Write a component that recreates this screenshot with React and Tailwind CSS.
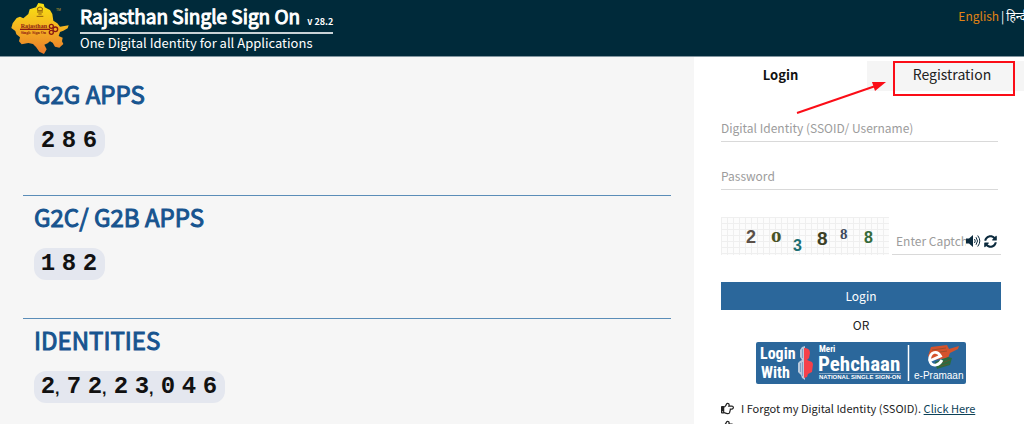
import { FaRegHandPointRight, FaSyncAlt } from "react-icons/fa";

const stats = [
  { title: "G2G APPS", value: "286" },
  { title: "G2C/ G2B APPS", value: "182" },
  { title: "IDENTITIES", value: "2,72,23,046" },
];

const captcha = [
  { char: "2", x: 25, y: 26, size: 18, fill: "#5b5048", font: "Liberation Sans" },
  { char: "o", x: 50, y: 25, size: 21, fill: "#4a5426", font: "Liberation Serif" },
  { char: "3", x: 72, y: 34, size: 16, fill: "#1d6f74", font: "Liberation Sans" },
  { char: "8", x: 96, y: 28, size: 19, fill: "#3b3f25", font: "Liberation Sans" },
  { char: "8", x: 119, y: 22, size: 15, fill: "#3f4a5c", font: "Liberation Serif" },
  { char: "8", x: 143, y: 26, size: 16, fill: "#356a3a", font: "Liberation Sans" },
];

function MapLogo() {
  return (
    <svg viewBox="30 0 180 168" className="h-14 w-[60px] shrink-0" role="img" aria-label="Rajasthan Single Sign On">
      <defs>
        <linearGradient id="map" x1="0" y1="0" x2="0" y2="1">
          <stop offset="0" stopColor="#f8e210" />
          <stop offset="0.45" stopColor="#f5b820" />
          <stop offset="1" stopColor="#e9782c" />
        </linearGradient>
      </defs>
      <path
        fill="url(#map)"
        d="M115 9L131 12 134 22 150 30 157 42 160 62 172 70 180 80 206 76 203 85 190 92 180 96 176 108 188 113 186 124 190 132 178 143 165 140 158 128 150 124 143 130 133 134 140 148 132 162 118 155 108 141 99 132 85 129 65 133 57 124 60 112 49 103 46 93 34 84 38 70 50 54 60 50 70 55 85 42 89 28 108 22Z"
      />
      <g fill="none" stroke="#8c5a0c" strokeWidth="3">
        <path d="M113 24q7-6 14 0v8h-14zM111 36h18M115 42h10M110 49h20" />
      </g>
      <g stroke="#8b1a12" fill="none" strokeWidth="4">
        <path d="M60 88h90" />
        <circle cx="154" cy="79" r="6" />
        <circle cx="154" cy="97" r="6" />
        <circle cx="166" cy="88" r="7" />
      </g>
      <g fill="#8b1a12" fontFamily="Liberation Serif, serif" fontWeight="bold">
        <text x="62" y="84" fontSize="18">Rajasthan</text>
        <text x="62" y="102" fontSize="12">Single Sign On</text>
      </g>
      <text x="168" y="32" fontSize="10" fill="#c9a227" fontFamily="Liberation Sans, sans-serif">TM</text>
    </svg>
  );
}

function Counter({ value }) {
  const groups = value.match(/\d,?/g);
  return (
    <p className="flex h-8 w-fit gap-[7px] rounded-xl bg-[#e4e7ef] pr-2 pl-[7px] font-['Liberation_Mono',monospace] text-2xl leading-8 font-bold text-[#111]">
      {groups.map((g, i) => (
        <span key={i} className="flex">
          <span className="flex w-[14px] justify-center">{g[0]}</span>
          {g[1] && <span className="w-[5px] font-['Liberation_Sans',sans-serif] text-base leading-9">,</span>}
        </span>
      ))}
    </p>
  );
}

function Captcha() {
  return (
    <svg viewBox="0 0 168 38" className="h-[38px] w-[168px] shrink-0" role="img" aria-label="Captcha">
      <defs>
        <pattern id="grid" width="6" height="6" patternUnits="userSpaceOnUse">
          <path d="M0 .5H6M.5 0V6" stroke="#efefef" fill="none" />
        </pattern>
      </defs>
      <rect width="168" height="38" fill="#fcfcfc" />
      <rect width="168" height="38" fill="url(#grid)" />
      {captcha.map((c, i) => (
        <text key={i} x={c.x} y={c.y} fontSize={c.size} fill={c.fill} fontFamily={c.font} fontWeight="bold">
          {c.char}
        </text>
      ))}
    </svg>
  );
}

function Volume() {
  return (
    <svg viewBox="0 0 15 14" className="h-[14px] w-[15px]" fill="none" stroke="#0b2a3d" aria-hidden="true">
      <path d="M0 4.500h3L7 1v12L3 9.500H0z" fill="#0b2a3d" stroke="none" />
      <path d="M8.500 5q1.500 2 0 4M10 3.200q3 3.800 0 7.600M11.700 1.500q4.200 5.500 0 11" strokeWidth="1" />
    </svg>
  );
}

function PehchaanBanner() {
  return (
    <svg viewBox="0 0 210 42" className="h-[42px] w-[210px]" aria-hidden="true">
      <rect width="210" height="42" rx="2" fill="#2b679b" />
      <g fill="#fff" fontFamily="'Liberation Sans Narrow', 'Roboto Condensed', 'Open Sans Condensed', 'Liberation Sans', sans-serif" fontWeight="bold">
        <text x="4" y="17" fontSize="16">Login</text>
        <text x="5" y="36" fontSize="16">With</text>
        <text x="63" y="10" fontSize="9">Meri</text>
        <text x="62" y="29" fontSize="21">Pehchaan</text>
      </g>
      <path d="M63 31.500H145" stroke="#7fa3c4" />
      <text x="63" y="37" fontSize="6" fill="#fff" fontFamily="Liberation Sans, sans-serif" fontWeight="bold">NATIONAL SINGLE SIGN-ON</text>
      <path d="M49 4V38L46 36 45 33 42 30V21L44 19 46 18 44 15V8L46 5Z" fill="#b9c9dc" />
      <path d="M46.500 7v9M44.500 21v9M46.500 20v14" stroke="#7d9fc2" />
      <path d="M48 6Q54 6 54 11L53 16 51 18 56 20 57 22 56 30 52 32 51 35 48 36Z" fill="#f5414a" />
      <path d="M152.500 3v36" stroke="#fff" strokeWidth="1.500" />
      <path d="M175 5L191 3 193 7 203 4 202 7 194 11 192 16 177 18 172 14Z" fill="#d5532c" />
      <path d="M179 20L192 15 196 16 194 23 181 27Z" fill="#2b6b40" />
      <path d="M176 8l14-2M177 11l14-2M184 24l9-2M186 21l8-3" stroke="#7a4a2c" strokeWidth=".6" />
      <path d="M174.500 18.500L184.500 14Q182 9.500 178 10.500T173.500 18Q175 24 180 23 184 22 186 18" fill="none" stroke="#fff" strokeWidth="2.800" />
      <text x="158" y="37" fontSize="10" fill="#fff" fontFamily="Liberation Sans, sans-serif">e-Pramaan</text>
    </svg>
  );
}

const field =
  "block h-[26px] w-full border-b border-[#d9d9d9] bg-transparent pb-[2px] text-xs leading-5 outline-none placeholder:text-[#9c9c9c] placeholder:opacity-100";

export default function App() {
  return (
    <div className="flex h-screen flex-col overflow-hidden bg-[#f6f6f6] font-['Noto_Sans_CJK_SC','Noto_Sans',sans-serif] text-[#222]">
      <header className="flex shrink-0 items-start border-b border-[#8296a0] bg-[#002a3a] pl-[10px] text-white">
        <MapLogo />
        <div className="ml-[10px] pt-1">
          <h1 className="flex items-end gap-[7px] border-b-2 border-[#c9d2d6] pb-1 text-[19px] leading-6 whitespace-nowrap [-webkit-text-stroke:1px_white]">
            Rajasthan Single Sign On
            <span className="text-[9px] leading-3 font-bold [-webkit-text-stroke:0]">v 28.2</span>
          </h1>
          <p className="text-[13px] leading-[17px]">One Digital Identity for all Applications</p>
        </div>
        <nav className="-mr-[5px] ml-auto flex gap-[2px] pt-[6px] text-xs leading-5 whitespace-nowrap">
          <a href="#en" className="text-[#e28413]">English</a>
          <span>|</span>
          <a href="#hi" lang="hi">हिन्दी</a>
        </nav>
      </header>

      <div className="flex min-h-0 flex-1">
        <main className="min-w-0 flex-1 px-[23px]">
          {stats.map((s) => (
            <section key={s.title} className="h-[123px] border-b border-[#5b8db8] pt-[5px] pl-[11px] first:h-[139px] first:pt-[21px] last:border-b-0">
              <h2 className="mb-[15px] text-2xl leading-8 text-[#17548f] [-webkit-text-stroke:1px_#17548f]">{s.title}</h2>
              <Counter value={s.value} />
            </section>
          ))}
        </main>

        <aside className="relative w-[330px] shrink-0 bg-white pt-1">
          <div role="tablist" className="flex leading-[27px]">
            <button role="tab" aria-selected="true" className="w-[173px] shrink-0 pb-[3px] text-[13px] font-bold text-[#111]">Login</button>
            <button role="tab" aria-selected="false" className="w-[170px] shrink-0 bg-[#f5f5f5] pb-[3px] text-sm leading-[27px]">Registration</button>
          </div>
          <form className="w-[307px] pt-[25px] pl-[27px]" onSubmit={(e) => e.preventDefault()}>
            <div className="space-y-[22px] pr-[3px]">
              <input aria-label="Digital Identity (SSOID/ Username)" placeholder="Digital Identity (SSOID/ Username)" className={field} />
              <input aria-label="Password" type="password" placeholder="Password" className={field} />
            </div>
            <div className="mt-[27px] flex">
              <Captcha />
              <div className="ml-[3px] flex w-[109px] items-center self-end border-b border-[#d9d9d9] pl-1">
                <input aria-label="Captcha" placeholder="Enter Captcha" className="h-[26px] w-[70px] pb-[2px] text-xs leading-5 outline-none placeholder:text-[#9c9c9c] placeholder:opacity-100" />
                <button type="button" aria-label="Play captcha"><Volume /></button>
                <button type="button" aria-label="Refresh captcha" className="ml-[3px] text-[13px] text-[#0b2a3d]"><FaSyncAlt /></button>
              </div>
            </div>
            <button type="submit" className="mt-[27px] block h-7 w-full bg-[#2b679b] pb-px text-xs leading-[27px] text-white">Login</button>
            <p className="pt-[5px] pb-[7px] text-center text-xs leading-5">OR</p>
            <button type="button" aria-label="Login with Meri Pehchaan" className="mx-auto block"><PehchaanBanner /></button>
            <ul className="mt-[15px] space-y-[3px] text-[11px] leading-[18px] whitespace-nowrap">
              <li className="flex items-center gap-[7px]">
                <FaRegHandPointRight className="text-[13px]" />
                <span>I Forgot my Digital Identity (SSOID). <a href="#ssoid" className="text-[#0d4258] underline">Click Here</a></span>
              </li>
              <li><FaRegHandPointRight className="text-[13px]" /></li>
            </ul>
          </form>
          <svg viewBox="0 0 220 60" className="pointer-events-none absolute top-1 left-[101px] h-[60px] w-[220px]" aria-hidden="true">
            <rect x="99" y="1" width="120" height="33" fill="none" stroke="#fb0d17" strokeWidth="2" />
            <path d="M2 52L79 25.500" stroke="#fb0d17" strokeWidth="2" />
            <path d="M91 21L77 21l3 9z" fill="#fb0d17" />
          </svg>
        </aside>
      </div>
    </div>
  );
}
